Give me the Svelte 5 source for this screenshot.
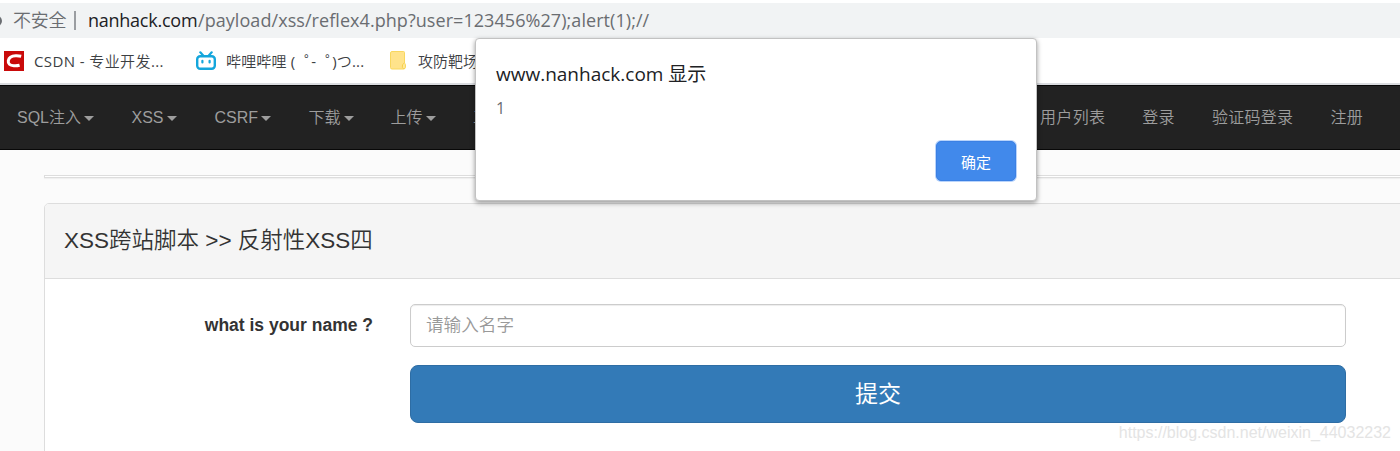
<script>
  const menus = [
    { label: 'SQL注入', width: 114.5 },
    { label: 'XSS', width: 83 },
    { label: 'CSRF', width: 94 },
    { label: '下载', width: 82 },
    { label: '上传', width: 82.5 },
    { label: '工', width: 60 }
  ];
  const links = ['用户列表', '登录', '验证码登录', '注册'];
</script>

<div class="page">
  <div class="address">
    <span class="info"></span>
    <span class="unsafe">不安全</span>
    <span class="sep"></span>
    <span class="host">nanhack.com</span><span class="path">/payload/xss/reflex4.php?user=123456%27);alert(1);//</span>
  </div>

  <div class="bookmarks">
    <svg class="csdn" width="20" height="20" viewBox="0 0 20 20">
      <rect width="20" height="20" fill="#c90a0a" />
      <path d="M17.2 5.3Q14.5 4.7 11.7 4.8Q5.2 5 4.3 9.7Q3.7 14.3 9.8 14.7Q13 14.9 15.6 14.2" fill="none" stroke="#fff" stroke-width="3" />
    </svg>
    <span class="bm first">CSDN - <em>专业开发</em>...</span>
    <svg class="bili" width="20" height="20" viewBox="0 0 20 20">
      <rect x="1.2" y="5.2" width="17.6" height="12.6" rx="3" fill="none" stroke="#14a6dc" stroke-width="2.4" />
      <path d="M4.3 1.3L7.2 4.5M15.7 1.3L12.8 4.5M6.4 9.8v1.6M13.6 9.8v1.6" stroke="#14a6dc" stroke-width="2.2" stroke-linecap="round" />
    </svg>
    <span class="bm second"><em>哔哩哔哩</em> (<i>゜</i>-<i>゜</i>)<em>つ</em>...</span>
    <svg class="folder" width="17" height="19" viewBox="0 0 17 19">
      <path d="M2 .5H13.5Q14.5 .5 14.5 1.5V12Q16 13 15.5 16.5Q15 18 13.5 18H2Q.5 18 .5 16.5V2Q.5 .5 2 .5Z" fill="#ffe38b" stroke="#f8d75f" />
      <path d="M14.3 12Q11.8 13 12.3 16.5Q13 18 14.7 17.3" fill="#ffe99e" stroke="#f6cf48" />
    </svg>
    <span class="bm third"><em>攻防靶场</em></span>
  </div>

  <nav>
    <div class="left">
      {#each menus as m}
        <a style="width:{m.width}px"><span>{m.label}</span><b></b></a>
      {/each}
    </div>
    <div class="right">
      {#each links as l}<a>{l}</a>{/each}
    </div>
  </nav>

  <main>
    <div class="rule"></div>
    <section class="panel">
      <h3>XSS跨站脚本 &gt;&gt; 反射性XSS四</h3>
      <div class="form">
        <label for="user">what is your name ?</label>
        <div class="fields">
          <input id="user" placeholder="请输入名字" />
          <button class="submit">提交</button>
        </div>
      </div>
    </section>
  </main>

  <div class="dialog">
    <div class="title"><span>www.nanhack.com</span> 显示</div>
    <div class="message">1</div>
    <button class="ok">确定</button>
  </div>

  <div class="watermark">https://blog.csdn.net/weixin_44032232</div>
</div>

<style>
  :global(body) { margin: 0; }
  * { box-sizing: border-box; }
  .page {
    position: relative; width: 1400px; height: 451px; overflow: hidden;
    background: #fbfbfb; color: #333;
    font-family: "Liberation Sans", "Noto Sans CJK SC", sans-serif; font-weight: 400;
  }
  .address {
    display: flex; align-items: center; height: 38px; border-top: 3px solid #fff;
    background: #f1f3f4; color: #6a6d71; white-space: nowrap;
    font: 400 18px/35px "Open Sans", "Noto Sans CJK SC", sans-serif;
  }
  .info { width: 13px; height: 12px; margin-left: -11px; border: 2px solid #6a6d71; border-radius: 50%; }
  .unsafe { width: 61px; margin-left: 11px; font-weight: 350; letter-spacing: -.2px; }
  .sep { width: 2px; height: 19px; margin-right: 12px; background: #9a9da1; }
  .host { width: 110px; color: #202124; letter-spacing: -.25px; }
  .path { letter-spacing: .06px; }
  .bookmarks {
    display: flex; align-items: center; height: 47px; padding: 0 0 0 4px;
    background: #fff; border-bottom: 2px solid #dadce0;
    font-family: "Open Sans", "Noto Sans CJK SC", "Noto Sans CJK JP", sans-serif;
    font-size: 15px; line-height: 44px; color: #3c4043; white-space: nowrap;
  }
  .bookmarks svg { flex: none; }
  .bm { flex: none; font-weight: 400; }
  .bm em { font-style: normal; font-weight: 350; }
  .bm i { display: inline-block; width: 16px; text-indent: 9px; font-style: normal; }
  .first { width: 162px; margin-left: 10px; letter-spacing: .4px; }
  .second { width: 164px; margin-left: 10px; letter-spacing: .15px; }
  .third { margin-left: 11px; }
  nav {
    display: flex; justify-content: space-between; height: 65px;
    border-top: 1px solid #080808; border-bottom: 1px solid #080808;
    background: #222; color: #9d9d9d; font-size: 16px; line-height: 63px; font-weight: 350;
  }
  .left { display: flex; padding-left: 17px; white-space: nowrap; }
  .left a { display: flex; align-items: center; }
  .left b {
    width: 0; height: 0; margin: 2px 0 0 3px;
    border: 5px solid transparent; border-top-color: #9d9d9d; border-bottom: 0;
  }
  .right { display: flex; gap: 37px; padding-right: 37px; letter-spacing: .3px; }
  main { padding: 25px 0 0 44px; }
  .rule {
    height: 3px; margin-bottom: 25px; background: #fff;
    border: 1px solid #ddd; border-right: 0;
    box-shadow: 0 1px 1px rgba(0, 0, 0, .05);
  }
  .panel { width: 1390px; height: 300px; background: #fff; border: 1px solid #ddd; border-radius: 5px; }
  h3 {
    height: 75px; margin: 0; padding-left: 19px; background: #f5f5f5;
    border-bottom: 1px solid #ddd; border-radius: 4px 4px 0 0;
    font-size: 22.5px; line-height: 73px; font-weight: 350;
  }
  .form { display: flex; padding-top: 25px; }
  label { width: 328px; text-align: right; font-size: 17.5px; line-height: 42px; font-weight: 700; }
  .fields { display: flex; flex-direction: column; gap: 18px; width: 936px; margin-left: 37px; }
  input {
    height: 43px; padding: 0 15px; border: 1px solid #ccc; border-radius: 5px; background: #fff;
    box-shadow: inset 0 1px 1px rgba(0, 0, 0, .075); outline: 0;
    font: 350 17.6px "Liberation Sans", "Noto Sans CJK SC", sans-serif;
  }
  input::placeholder { color: #999; opacity: 1; }
  .submit {
    height: 58px; padding: 0 0 5px; border: 1px solid #2e6da4; border-radius: 8px; background: #337ab7; color: #fff;
    font: 400 23px "Liberation Sans", "Noto Sans CJK SC", sans-serif;
  }
  .dialog {
    position: absolute; left: 475px; top: 38px; width: 562px; height: 163px;
    display: flex; flex-direction: column; padding: 21px 20px 19px;
    border: 1px solid #c2c2c2; border-radius: 4px; background: #fff;
    box-shadow: 0 2px 5px rgba(0, 0, 0, .4);
    font-family: "Open Sans", "Noto Sans CJK SC", sans-serif; color: #202124;
  }
  .title { font-size: 19px; line-height: 28px; white-space: nowrap; }
  .message { margin-top: 8px; font-size: 16px; line-height: 24px; color: #6a6d71; }
  .ok {
    align-self: flex-end; flex: none; width: 80px; height: 40px; margin-top: 21px; padding: 0;
    border: 1px solid #3b80e4; border-radius: 5px; background: #4189eb; color: #fff;
    box-shadow: 0 0 0 1px #b9d4fb; font: 400 15px "Open Sans", "Noto Sans CJK SC", sans-serif;
  }
  .watermark {
    position: absolute; right: 9px; bottom: 8px; color: #e4e4e4;
    font-size: 16px; line-height: 20px; white-space: nowrap;
  }
</style>
